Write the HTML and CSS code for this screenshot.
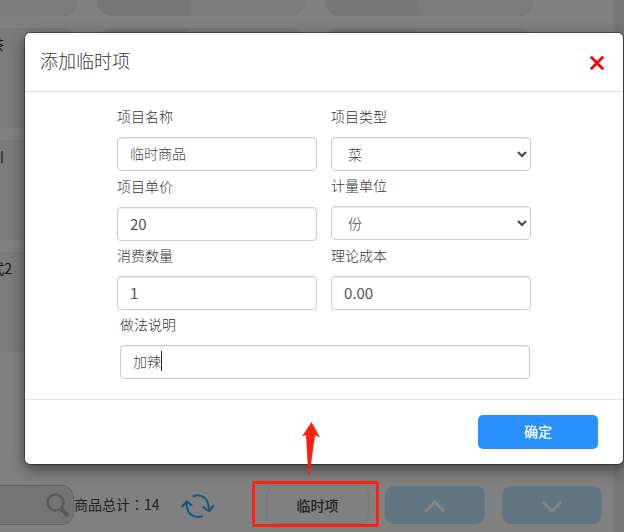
FILE: index.html
```html
<!DOCTYPE html>
<html lang="zh-CN">
<head>
<meta charset="utf-8">
<title>添加临时项</title>
<link rel="stylesheet" href="styles.css">
</head>
<body>
<div class="page">
  <div class="main">
    <div class="cards">
      <div class="card"></div><div class="card"></div><div class="card"></div>
      <div class="card"><span class="name">花茶</span></div><div class="card"></div><div class="card"></div>
      <div class="card"><span class="name">四川</span></div><div class="card"></div><div class="card"></div>
      <div class="card"><span class="name wide">套餐式2</span></div><div class="card"></div><div class="card"></div>
    </div>
    <div class="toolbar">
      <div class="search">
        <svg width="24" height="25" viewBox="0 0 24 25" fill="none" stroke="#5a5a5a"><circle cx="9.500" cy="9.500" r="8" stroke-width="2.500"/><path d="M15 15.500l1.500 1.500" stroke-width="3"/><path d="M16.500 17l4.300 4.500" stroke-width="4.500" stroke-linecap="round"/></svg>
      </div>
      <span class="total">商品总计<span lang="zh-TW" class="colon">：</span>14</span>
      <svg class="refresh" width="34" height="26" viewBox="0 0 34 26" fill="none" stroke="#14587d" stroke-width="2" stroke-linecap="round" stroke-linejoin="round"><path d="M12.500 3.200C21 .2 28.500 6 28 18M22.500 14l5.500 4.300 4.300-5.300M21 23.200C11.500 26.200 5 20 5.700 8.500M1.300 13.500L5.700 8.300l4.800 4"/></svg>
      <div class="temp">临时项</div>
      <div class="pager"><svg width="22" height="13" viewBox="0 0 22 13"><path d="M1.500 11.500L11 2l9.500 9.500"/></svg></div>
      <div class="pager next"><svg width="22" height="13" viewBox="0 0 22 13"><path d="M1.500 1.500L11 11l9.500-9.500"/></svg></div>
    </div>
  </div>
  <div class="side"></div>
</div>

<div class="modal">
  <div class="modal-header">
    <h4>添加临时项</h4>
    <svg class="close" width="16" height="16" viewBox="0 0 16 16"><path d="M1.800 1.800l12.400 12.400M14.200 1.800L1.800 14.200" stroke="#f00" stroke-width="2.800"/></svg>
  </div>
  <div class="modal-body">
    <div class="columns">
      <div class="column">
        <label>项目名称</label><input class="field" value="临时商品">
        <label class="lower">项目单价</label><input class="field number" value="20">
        <label class="raised">消费数量</label><input class="field number" value="1">
      </div>
      <div class="column">
        <label>项目类型</label><select class="field"><option>菜</option></select>
        <label class="even">计量单位</label><select class="field"><option>份</option></select>
        <label class="even last">理论成本</label><input class="field number" value="0.00">
      </div>
    </div>
    <div class="note">
      <label class="raised">做法说明</label>
      <div class="field"><span class="caret">加辣</span></div>
    </div>
  </div>
  <div class="modal-footer"><button class="ok">确定</button></div>
</div>

<div class="highlight"></div>
<svg class="arrow" width="20" height="54" viewBox="0 0 20 54"><path d="M9.500 0l8.500 15.500-5-2.500L7.500 53H6.300L4 13 0 14.500z" fill="#ff2010"/></svg>
</body>
</html>
```

FILE: styles.css
```css
* { box-sizing: border-box; }
body {
  margin: 0;
  width: 624px;
  height: 532px;
  overflow: hidden;
  font: 14px/20px "Noto Sans CJK SC", sans-serif;
  color: #333;
}
.page { display: flex; height: 532px; overflow: hidden; background: #808080; }
.main { width: 613px; flex: none; overflow: hidden; }
.side { flex: 1; background: #767676; border-left: 1px solid #7a7a7a; }
.cards {
  display: grid;
  grid-template-columns: repeat(3, 208px);
  grid-auto-rows: 100px;
  gap: 12px 20px;
  margin: -84px 0 0 -131px;
  height: 569px;
}
.card {
  border: 1px solid #787878;
  border-radius: 14px;
  background: linear-gradient(90deg, #767676 91px, #7b7b7b 91px);
}
.card:nth-child(3n + 1) { background: #7b7b7b; }
.name { display: block; width: 134px; padding-top: 5px; text-align: right; color: #111; }
.name.wide { width: 142px; }
.toolbar { display: flex; align-items: flex-start; }
.search {
  width: 94px;
  height: 40px;
  margin-left: -20px;
  padding: 7px 3px 0 0;
  border: 1px solid #636363;
  border-radius: 12px;
  background: #747474;
  text-align: right;
}
.total { width: 107px; padding-top: 9px; color: #222; white-space: nowrap; }
.colon { font-family: "Noto Sans CJK TC", sans-serif; }
.refresh { margin: 8px 51px 0 0; }
.temp {
  width: 103px;
  height: 39px;
  margin-right: 16px;
  border: 1px solid #777;
  border-radius: 10px;
  line-height: 38px;
  text-align: center;
  font-weight: 500;
  color: #222;
}
.pager {
  display: flex;
  align-items: center;
  justify-content: center;
  width: 100px;
  height: 38px;
  margin: 1px 17px 0 0;
  padding-top: 2px;
  border-radius: 9px;
  background: #617681;
}
.pager.next { margin-right: 0; }
.pager path { fill: none; stroke: #858585; stroke-width: 3; }

.modal {
  position: absolute;
  left: 25px;
  top: 33px;
  width: 598px;
  height: 431px;
  border-radius: 5px;
  background: #fff;
  box-shadow: 0 0 0 1px rgba(0, 0, 0, .35), 0 5px 15px rgba(0, 0, 0, .5);
}
.modal-header {
  display: flex;
  justify-content: space-between;
  height: 59px;
  padding: 14px 18px 0 15px;
  border-bottom: 1px solid #e2e2e2;
}
h4 { margin: 0; font-size: 18px; font-weight: 300; line-height: 26px; }
.close { margin-top: 8px; }
.modal-body { height: 307px; padding: 14px 92px 0; }
.columns { display: flex; gap: 14px; }
.column { width: 200px; }
label { display: block; height: 31px; font-weight: 300; }
.lower { margin-top: 5px; }
.raised { margin-top: 4px; }
.even { margin-top: 4px; }
.last { margin-top: 5px; }
.field {
  display: block;
  width: 100%;
  height: 34px;
  padding: 5px 12px 7px;
  border: 1px solid #ccc;
  border-radius: 4px;
  background: #fff;
  box-shadow: inset 0 1px 1px rgba(0, 0, 0, .075);
  font: 300 14px/20px "Noto Sans CJK SC", sans-serif;
  color: #444;
  outline: none;
}
.number { font-size: 15px; font-weight: 400; color: #555; }
.note { width: 410px; margin-left: 3px; }
.caret { display: inline-block; border-right: 1px solid #222; }
.modal-footer {
  display: flex;
  justify-content: flex-end;
  height: 65px;
  padding: 15px 25px;
  border-top: 1px solid #e5e5e5;
}
.ok {
  width: 120px;
  height: 34px;
  padding: 0 0 2px;
  border: 0;
  border-radius: 5px;
  background: #2890ff;
  color: #fff;
  font: 500 14px/32px "Noto Sans CJK SC", sans-serif;
}
.highlight {
  position: absolute;
  left: 252px;
  top: 481px;
  width: 127px;
  height: 46px;
  border: 3px solid #ff2010;
  border-radius: 3px;
}
.arrow { position: absolute; left: 302px; top: 422px; }
```
